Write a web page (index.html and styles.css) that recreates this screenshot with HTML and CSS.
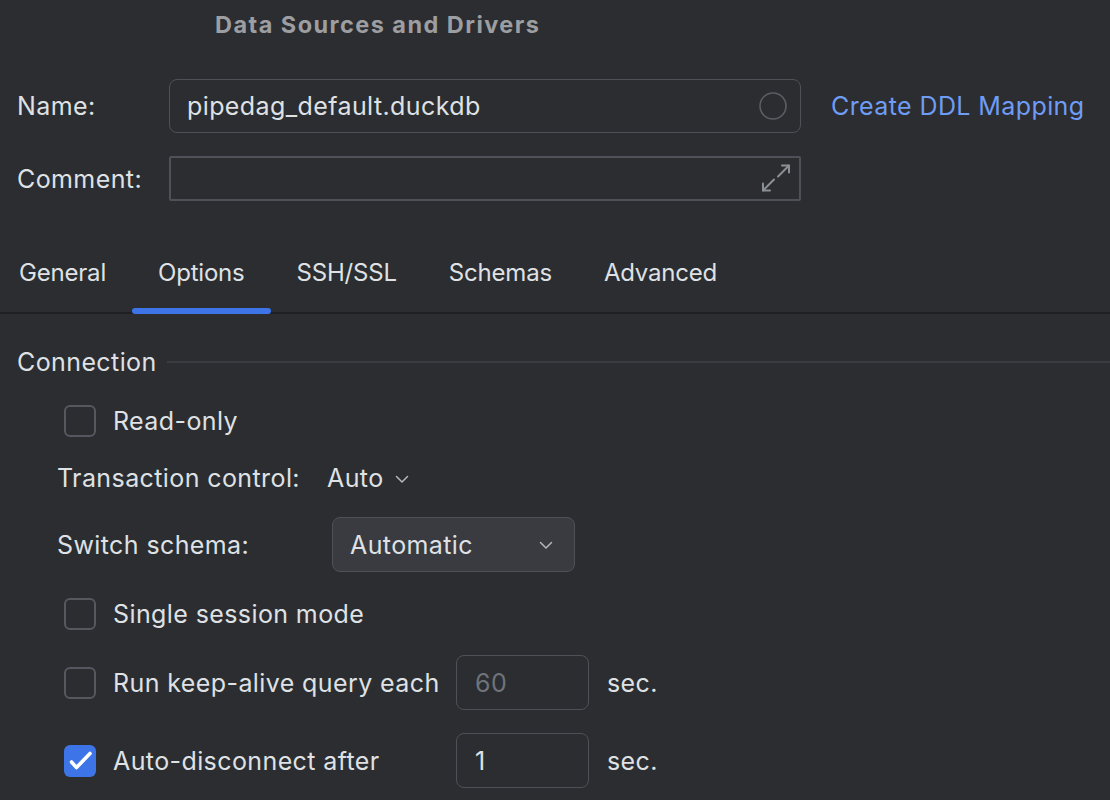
FILE: index.html
```html
<!DOCTYPE html>
<html>
<head>
<meta charset="utf-8">
<link rel="stylesheet" href="styles.css">
</head>
<body>
<div class="page">
  <div class="title">Data Sources and Drivers</div>

  <div class="form-row name-row">
    <div class="form-label">Name:</div>
    <div class="field field-name">
      <span class="field-text">pipedag_default.duckdb</span>
      <svg class="circle-icon" width="30" height="30" viewBox="0 0 30 30"><circle cx="15" cy="15" r="13" fill="none" stroke="#5b5e63" stroke-width="1.6"/></svg>
    </div>
    <a class="link">Create DDL Mapping</a>
  </div>

  <div class="form-row comment-row">
    <div class="form-label">Comment:</div>
    <div class="field field-comment">
      <svg class="expand-icon" width="32" height="30" viewBox="0 0 32 30" fill="none" stroke="#8c8f94" stroke-width="2" stroke-linecap="round" stroke-linejoin="round">
        <path d="M3 26.5 L14 15.5"/>
        <path d="M3 19.5 L3 26.5 L10 26.5"/>
        <path d="M29 1.5 L18 12.5"/>
        <path d="M22 1.5 L29 1.5 L29 8.5"/>
      </svg>
    </div>
  </div>

  <div class="tabs">
    <div class="tab tab-first">General</div>
    <div class="tab tab-active">Options</div>
    <div class="tab">SSH/SSL</div>
    <div class="tab">Schemas</div>
    <div class="tab">Advanced</div>
  </div>

  <div class="section">
    <div class="section-head">
      <span>Connection</span>
      <div class="section-line"></div>
    </div>

    <div class="row row-check r-readonly">
      <span class="checkbox"></span>
      <span>Read-only</span>
    </div>

    <div class="row row-label r-trans">
      <span class="lbl-trans">Transaction control:</span>
      <span class="auto-select">Auto
        <svg width="14" height="10" viewBox="0 0 14 10" fill="none" stroke="#b4b7bc" stroke-width="1.5" stroke-linecap="round" stroke-linejoin="round"><path d="M1.5 2.5 L7 8 L12.5 2.5"/></svg>
      </span>
    </div>

    <div class="row row-label r-switch">
      <span class="lbl-switch">Switch schema:</span>
      <div class="combo">
        <span>Automatic</span>
        <svg width="14" height="10" viewBox="0 0 14 10" fill="none" stroke="#b4b7bc" stroke-width="1.5" stroke-linecap="round" stroke-linejoin="round"><path d="M1.5 2.5 L7 8 L12.5 2.5"/></svg>
      </div>
    </div>

    <div class="row row-check r-single">
      <span class="checkbox"></span>
      <span>Single session mode</span>
    </div>

    <div class="row row-check r-keep">
      <span class="checkbox"></span>
      <span class="lbl-keep">Run keep-alive query each</span>
      <div class="num-field disabled">60</div>
      <span class="sec">sec.</span>
    </div>

    <div class="row row-check r-auto">
      <span class="checkbox checked">
        <svg width="32" height="32" viewBox="0 0 32 32" fill="none" stroke="#ffffff" stroke-width="3.6" stroke-linecap="round" stroke-linejoin="round"><path d="M7.5 17 L12.5 22.5 L26 8.5"/></svg>
      </span>
      <span class="lbl-keep">Auto-disconnect after</span>
      <div class="num-field">1</div>
      <span class="sec">sec.</span>
    </div>
  </div>
</div>
</body>
</html>
```

FILE: styles.css
```css
html, body {
  margin: 0;
  padding: 0;
  background: #2b2d30;
}
body {
  font-family: Inter, "Noto Sans", sans-serif;
  font-size: 25px;
  letter-spacing: 0.4px;
  color: #dfe1e5;
  width: 1110px;
  height: 800px;
  overflow: hidden;
}
.page {
  display: flex;
  flex-direction: column;
}
.title {
  height: 50px;
  line-height: 49px;
  padding-left: 215px;
  font-weight: 700;
  color: #9c9ea2;
  font-size: 23.5px;
  letter-spacing: 1.45px;
}
.form-row {
  display: flex;
  align-items: center;
}
.name-row {
  margin-top: 29px;
  height: 54px;
}
.comment-row {
  margin-top: 23px;
  height: 45px;
}
.form-label {
  width: 152px;
  padding-left: 17px;
}
.field {
  box-sizing: border-box;
  width: 632px;
  display: flex;
  align-items: center;
  justify-content: space-between;
}
.field-name {
  height: 54px;
  border: 1.5px solid #4e5157;
  border-radius: 8px;
  padding: 0 12px 0 17px;
}
.field-comment {
  height: 45px;
  border: 2px solid #4e5157;
  border-radius: 2px;
  justify-content: flex-end;
  padding-right: 7px;
}
.circle-icon { display: block; }
.expand-icon { display: block; }
.link {
  margin-left: 30px;
  color: #6f9cf5;
}
.tabs {
  display: flex;
  margin-top: 33px;
  height: 80px;
  border-bottom: 2px solid #1e1f22;
  box-sizing: border-box;
  font-size: 24px;
  letter-spacing: -0.2px;
}
.tab {
  padding: 0 26px;
  height: 78px;
  line-height: 77px;
  position: relative;
}
.tab-first {
  padding-left: 19px;
}
.tab-active::after {
  content: "";
  position: absolute;
  left: 0;
  right: 0;
  bottom: -2px;
  height: 6px;
  border-radius: 3px;
  background: #3d74e8;
}
.section {
  display: flex;
  flex-direction: column;
  margin-top: 32px;
}
.section-head {
  display: flex;
  align-items: center;
  height: 32px;
  padding-left: 17px;
}
.section-line {
  flex: 1;
  height: 2px;
  background: #393b40;
  margin-left: 10px;
}
.row {
  display: flex;
  align-items: center;
}
.row-check {
  padding-left: 64px;
}
.row-label {
  padding-left: 57px;
}
.checkbox {
  box-sizing: border-box;
  width: 32px;
  height: 32px;
  border: 2px solid #55585e;
  border-radius: 6px;
  margin-right: 17px;
  display: flex;
  align-items: center;
  justify-content: center;
  flex: none;
}
.checkbox.checked {
  background: #3d74e8;
  border: none;
}
.checkbox.checked svg { display: block; }
.r-readonly { margin-top: 27px; height: 32px; }
.r-trans { margin-top: 25px; height: 32px; }
.r-switch { margin-top: 23px; height: 55px; }
.r-single { margin-top: 26px; height: 32px; }
.r-keep { margin-top: 25px; height: 55px; }
.r-auto { margin-top: 23px; height: 55px; }
.lbl-trans { width: 270px; }
.auto-select {
  display: flex;
  align-items: center;
  gap: 11px;
}
.auto-select svg { margin-top: 2px; }
.lbl-switch { width: 275px; }
.combo {
  box-sizing: border-box;
  width: 243px;
  height: 55px;
  background: #393b40;
  border: 1.5px solid #4e5157;
  border-radius: 8px;
  display: flex;
  align-items: center;
  justify-content: space-between;
  padding: 0 21px 0 17px;
}
.lbl-keep { width: 343px; }
.num-field {
  box-sizing: border-box;
  width: 133px;
  height: 55px;
  border: 1.5px solid #4e5157;
  border-radius: 8px;
  display: flex;
  align-items: center;
  padding-left: 18px;
}
.num-field.disabled { color: #6f737a; }
.sec { margin-left: 18px; }
```
